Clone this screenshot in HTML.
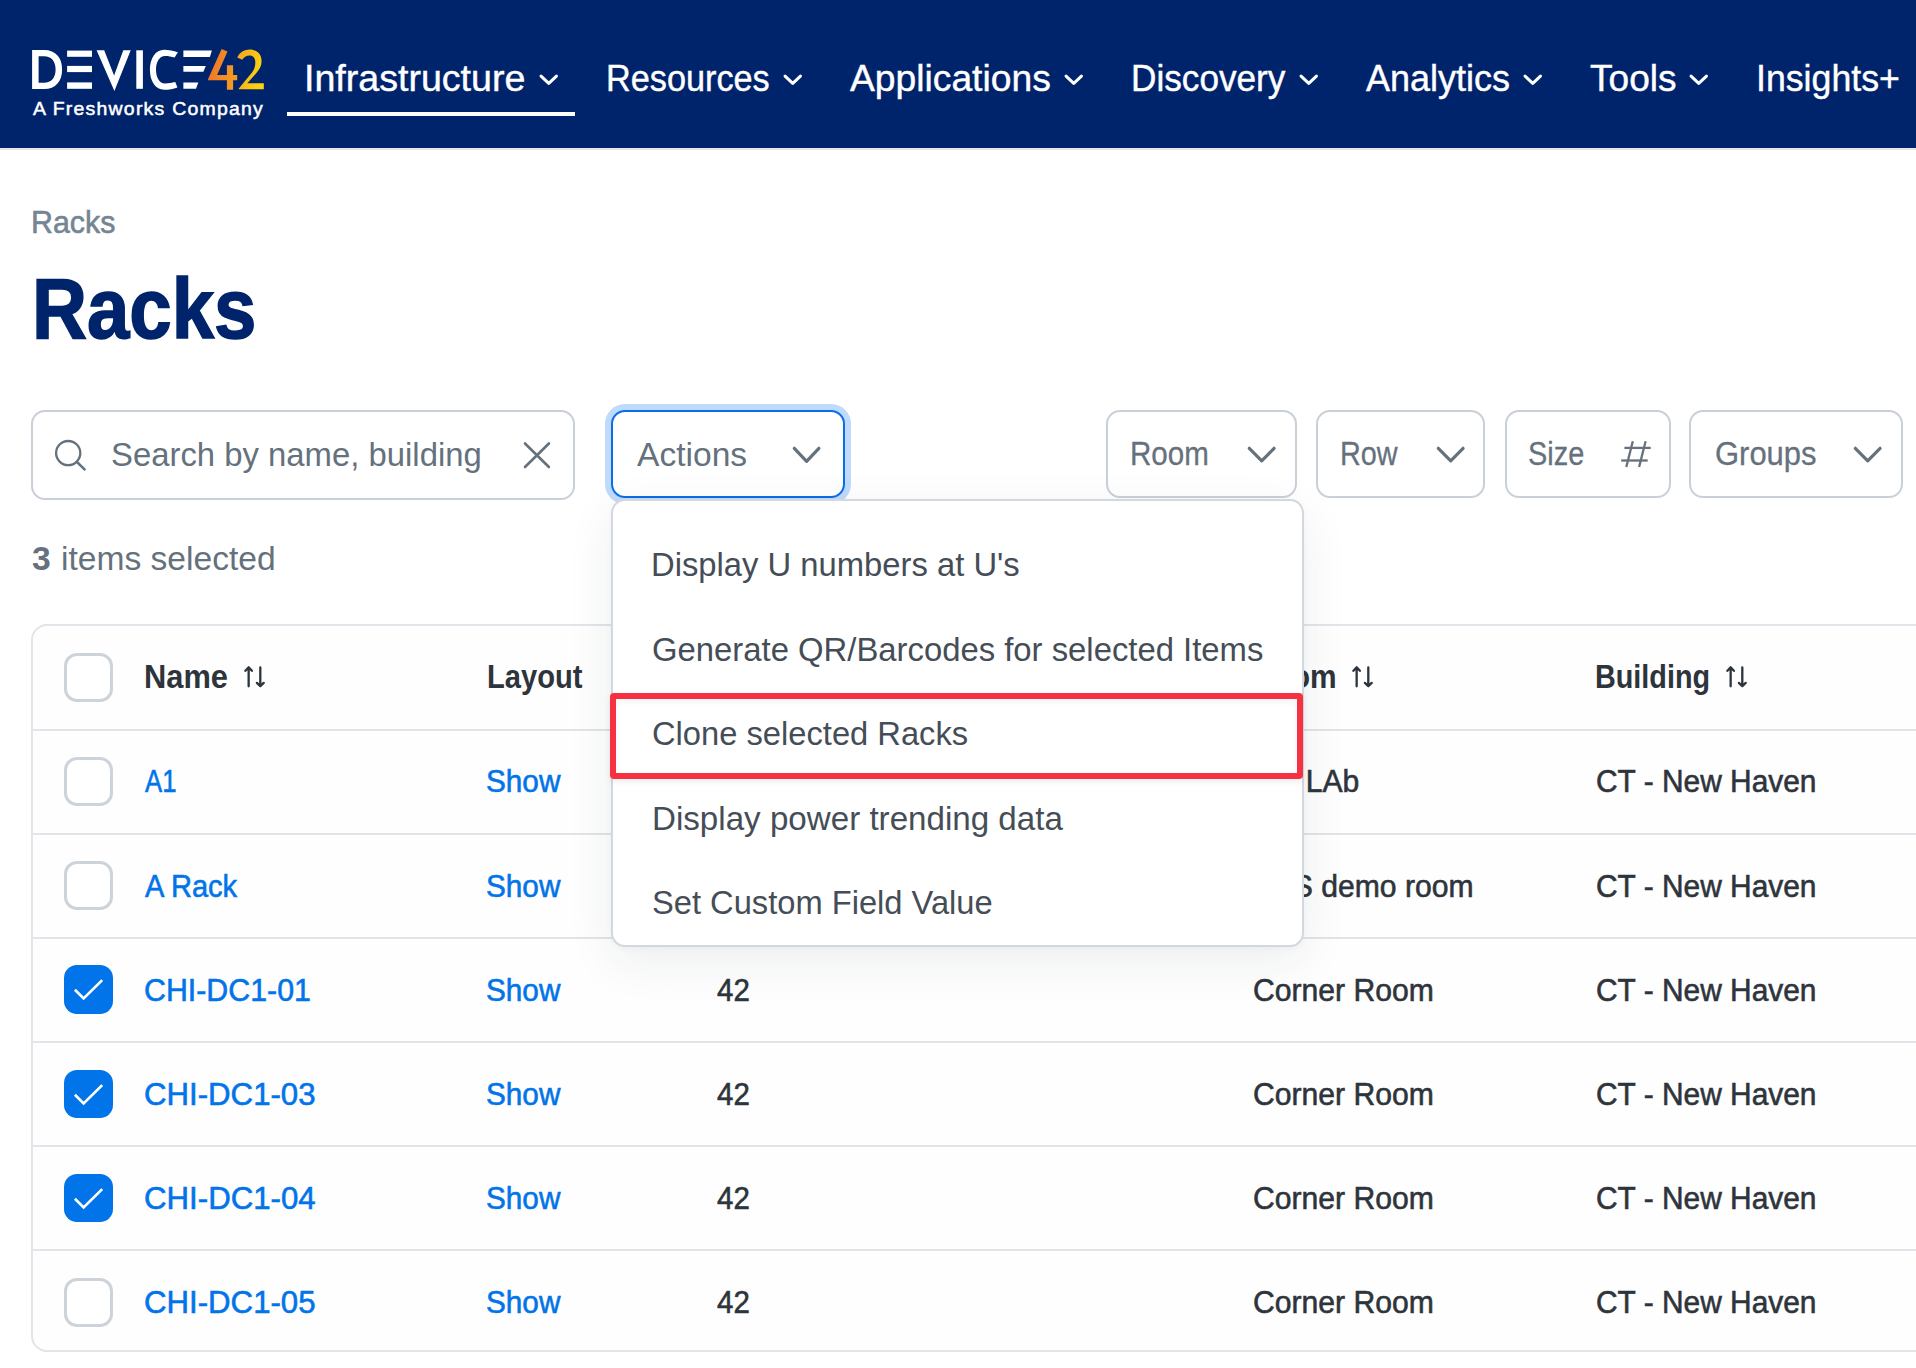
<!DOCTYPE html>
<html><head><meta charset="utf-8"><style>
html,body{margin:0;padding:0;}
body{width:1916px;height:1368px;overflow:hidden;position:relative;background:#fff;font-family:"Liberation Sans", sans-serif;}
.t{position:absolute;white-space:nowrap;line-height:40px;transform-origin:0 0;}
.t .bl{display:inline-block;width:0;height:0;vertical-align:baseline;}
.ic{position:absolute;overflow:visible;}
.box{position:absolute;border:2px solid #c9d0d8;border-radius:14px;box-sizing:border-box;background:#fff;}

</style></head><body>
<div style="position:absolute;left:0;top:0;width:1916px;height:148px;background:#00246b"></div>
<div style="position:absolute;left:0;top:148px;width:1916px;height:2px;background:#e4e7eb"></div>
<svg class="ic" style="left:0;top:0" width="280" height="130" viewBox="0 0 280 130">
<defs>
<linearGradient id="g4" x1="0" y1="0" x2="1" y2="0.3"><stop offset="0" stop-color="#ee6f2d"/><stop offset="1" stop-color="#f59a21"/></linearGradient>
<linearGradient id="g2" x1="0" y1="0" x2="1" y2="0.4"><stop offset="0" stop-color="#f5a51f"/><stop offset="1" stop-color="#fdd30f"/></linearGradient>
</defs>
<g fill="#fff">
<path d="M32.1,50 H44 C56,50 62.1,58 62.1,69.5 C62.1,81 56,89.1 44,89.1 H32.1 Z M38.6,56.3 V82.8 H44 C51.5,82.8 55.6,77.5 55.6,69.5 C55.6,61.5 51.5,56.3 44,56.3 Z"/>
<rect x="67.1" y="50.6" width="24.9" height="6.2"/>
<rect x="67.1" y="65.9" width="24.9" height="6.2"/>
<rect x="67.1" y="82.4" width="24.9" height="6.4"/>
<path d="M96.6,50.3 H104.2 L114.1,75.6 L123.3,50.3 H130.7 L114.4,91 Z"/>
<rect x="136.3" y="50.3" width="6.6" height="38.5"/>
<path d="M177.9,52.3 C173.5,50.6 168.8,49.75 164.2,49.75 C155.5,49.75 149.9,58.5 149.9,69.8 C149.9,81.1 155.5,89.8 164.2,89.8 C169,89.8 173.3,89 177.4,87.4 L175.3,82.1 C172,83 168.5,83.4 165,83.4 C159.5,83.4 156,77.5 156,69.7 C156,61.9 159.5,56 165,56 C168.5,56 171.6,56.6 174.6,57.6 Z"/>
<path d="M183.4,50.4 H211.9 L209.9,56.9 H183.4 Z"/>
<path d="M183.4,66 H205.8 L203.4,71.8 H183.4 Z"/>
<path d="M183.4,82.5 H198.3 L196,88.8 H183.4 Z"/>
</g>
<path fill="url(#g4)" d="M221.6,49 L227.5,51.6 L217.1,75 H226.9 V65.3 H233.1 V75 H237.2 V80.3 H233.1 V89.8 H226.9 V80.3 H208.1 V79 Z"/>
<path fill="url(#g2)" d="M237.2,57.4 C239.6,52.2 244.2,49.4 249.8,49.4 C256.6,49.4 261.6,54.2 261.6,61.2 C261.6,65.8 259.6,69.2 256.2,73.2 L247.3,83.2 H263.8 V89.2 H238.8 V88.6 L252.2,72.2 C254.4,69.4 255.3,66.4 255.3,62.2 C255.3,58 253,55.4 249.6,55.4 C246.2,55.4 243.8,57.2 242.3,59.8 Z"/>
</svg>
<div id="logo_sub" class="t" style="left:33.00px;top:88.80px;font-size:19px;color:#fff;font-weight:400;transform:scaleX(1.0234);-webkit-text-stroke-width:0.5px;letter-spacing:1.2px;">A Freshworks Company<i class="bl"></i></div>
<div id="nav1" class="t" style="left:304.20px;top:59.00px;font-size:36px;color:#fff;font-weight:400;transform:scaleX(1.0435);-webkit-text-stroke-width:0.4px;">Infrastructure<i class="bl"></i></div>
<svg class="ic" style="left:536.7px;top:71.7px" width="23.5" height="15.5"><polyline points="4.05,4.05 11.75,11.45 19.45,4.05" fill="none" stroke="#fff" stroke-width="3" stroke-linecap="round" stroke-linejoin="round"/></svg>
<div id="nav2" class="t" style="left:606.40px;top:59.00px;font-size:36px;color:#fff;font-weight:400;transform:scaleX(0.9513);-webkit-text-stroke-width:0.4px;">Resources<i class="bl"></i></div>
<svg class="ic" style="left:780.7px;top:71.7px" width="23.5" height="15.5"><polyline points="4.05,4.05 11.75,11.45 19.45,4.05" fill="none" stroke="#fff" stroke-width="3" stroke-linecap="round" stroke-linejoin="round"/></svg>
<div id="nav3" class="t" style="left:850.00px;top:59.00px;font-size:36px;color:#fff;font-weight:400;transform:scaleX(1.0343);-webkit-text-stroke-width:0.4px;">Applications<i class="bl"></i></div>
<svg class="ic" style="left:1061.6px;top:71.7px" width="23.5" height="15.5"><polyline points="4.05,4.05 11.75,11.45 19.45,4.05" fill="none" stroke="#fff" stroke-width="3" stroke-linecap="round" stroke-linejoin="round"/></svg>
<div id="nav4" class="t" style="left:1130.80px;top:59.00px;font-size:36px;color:#fff;font-weight:400;transform:scaleX(0.9769);-webkit-text-stroke-width:0.4px;">Discovery<i class="bl"></i></div>
<svg class="ic" style="left:1296.5px;top:71.7px" width="23.5" height="15.5"><polyline points="4.05,4.05 11.75,11.45 19.45,4.05" fill="none" stroke="#fff" stroke-width="3" stroke-linecap="round" stroke-linejoin="round"/></svg>
<div id="nav5" class="t" style="left:1366.10px;top:59.00px;font-size:36px;color:#fff;font-weight:400;transform:scaleX(1.0001);-webkit-text-stroke-width:0.4px;">Analytics<i class="bl"></i></div>
<svg class="ic" style="left:1521.3px;top:71.7px" width="23.5" height="15.5"><polyline points="4.05,4.05 11.75,11.45 19.45,4.05" fill="none" stroke="#fff" stroke-width="3" stroke-linecap="round" stroke-linejoin="round"/></svg>
<div id="nav6" class="t" style="left:1589.70px;top:59.00px;font-size:36px;color:#fff;font-weight:400;transform:scaleX(1.0297);-webkit-text-stroke-width:0.4px;">Tools<i class="bl"></i></div>
<svg class="ic" style="left:1686.7px;top:71.7px" width="23.5" height="15.5"><polyline points="4.05,4.05 11.75,11.45 19.45,4.05" fill="none" stroke="#fff" stroke-width="3" stroke-linecap="round" stroke-linejoin="round"/></svg>
<div id="nav7" class="t" style="left:1755.60px;top:59.00px;font-size:36px;color:#fff;font-weight:400;transform:scaleX(0.9915);-webkit-text-stroke-width:0.4px;">Insights+<i class="bl"></i></div>
<div style="position:absolute;left:287px;top:112px;width:288px;height:4px;background:#fff"></div>
<div id="bc" class="t" style="left:30.60px;top:201.91px;font-size:32px;color:#748593;font-weight:400;transform:scaleX(0.9490);-webkit-text-stroke-width:0.6px;">Racks<i class="bl"></i></div>
<div id="title" class="t" style="left:32.10px;top:288.00px;font-size:86px;color:#00246b;font-weight:700;transform:scaleX(0.8854);-webkit-text-stroke-width:1.6px;">Racks<i class="bl"></i></div>
<div class="box" style="left:31px;top:410px;width:544px;height:90px;border-color:#c9d0d8"></div>
<svg class="ic" style="left:50px;top:436px" width="40" height="40"><circle cx="18.2" cy="17.1" r="12.1" fill="none" stroke="#65717c" stroke-width="2.3"/><line x1="27" y1="26" x2="35.3" y2="34.1" stroke="#65717c" stroke-width="2.5" stroke-linecap="butt"/></svg>
<div id="search" class="t" style="left:110.50px;top:434.00px;font-size:34px;color:#65717c;font-weight:400;transform:scaleX(0.9663);">Search by name, building<i class="bl"></i></div>
<svg class="ic" style="left:520px;top:439px" width="34" height="33"><path d="M5,4.5 L28.9,28 M28.9,4.5 L5,28" stroke="#65717c" stroke-width="2.6" stroke-linecap="round"/></svg>
<div style="position:absolute;left:605px;top:404px;width:246px;height:100px;border-radius:20px;background:#bfdafc"></div>
<div class="box" style="left:611px;top:410px;width:234px;height:88px;border-color:#0a6ee8;background:#fff"></div>
<div id="actions" class="t" style="left:637.40px;top:434.20px;font-size:34px;color:#65717c;font-weight:400;transform:scaleX(0.9875);">Actions<i class="bl"></i></div>
<svg class="ic" style="left:789.8px;top:443.7px" width="33.2" height="21.6"><polyline points="4.32,4.32 16.6,17.279999999999998 28.88,4.32" fill="none" stroke="#65717c" stroke-width="3.2" stroke-linecap="round" stroke-linejoin="round"/></svg>
<div class="box" style="left:1106px;top:410px;width:191px;height:88px;border-color:#c9d0d8"></div>
<div id="f_room" class="t" style="left:1130.20px;top:433.91px;font-size:33px;color:#65717c;font-weight:400;transform:scaleX(0.8957);-webkit-text-stroke-width:0.3px;">Room<i class="bl"></i></div>
<svg class="ic" style="left:1245.0px;top:443.8px" width="33.4" height="21.1"><polyline points="4.32,4.32 16.7,16.779999999999998 29.08,4.32" fill="none" stroke="#65717c" stroke-width="3.2" stroke-linecap="round" stroke-linejoin="round"/></svg>
<div class="box" style="left:1315.7px;top:410px;width:169.7px;height:88px;border-color:#c9d0d8"></div>
<div id="f_row" class="t" style="left:1339.60px;top:433.91px;font-size:33px;color:#65717c;font-weight:400;transform:scaleX(0.8727);-webkit-text-stroke-width:0.3px;">Row<i class="bl"></i></div>
<svg class="ic" style="left:1434.2px;top:443.8px" width="33.4" height="21.1"><polyline points="4.32,4.32 16.7,16.779999999999998 29.08,4.32" fill="none" stroke="#65717c" stroke-width="3.2" stroke-linecap="round" stroke-linejoin="round"/></svg>
<div class="box" style="left:1504.6px;top:410px;width:166px;height:88px;border-color:#c9d0d8"></div>
<div id="f_size" class="t" style="left:1528.20px;top:433.91px;font-size:33px;color:#65717c;font-weight:400;transform:scaleX(0.8760);-webkit-text-stroke-width:0.3px;">Size<i class="bl"></i></div>
<div class="box" style="left:1689.2px;top:410px;width:213.5px;height:88px;border-color:#c9d0d8"></div>
<div id="f_groups" class="t" style="left:1714.50px;top:434.00px;font-size:33px;color:#65717c;font-weight:400;transform:scaleX(0.9381);-webkit-text-stroke-width:0.3px;">Groups<i class="bl"></i></div>
<svg class="ic" style="left:1850.8px;top:443.8px" width="33.4" height="21.1"><polyline points="4.32,4.32 16.7,16.779999999999998 29.08,4.32" fill="none" stroke="#65717c" stroke-width="3.2" stroke-linecap="round" stroke-linejoin="round"/></svg>
<svg class="ic" style="left:1615px;top:436px" width="42" height="36"><g stroke="#65717c" stroke-width="2.3" stroke-linecap="butt"><line x1="17.8" y1="5.2" x2="11.3" y2="31"/><line x1="30.6" y1="5.2" x2="24.1" y2="31"/><line x1="9.4" y1="11.9" x2="35.7" y2="11.9"/><line x1="6.2" y1="24.5" x2="32.7" y2="24.5"/></g></svg>
<div id="sel3" class="t" style="left:31.80px;top:537.70px;font-size:34px;color:#65717c;font-weight:700;transform:scaleX(0.9879);">3<i class="bl"></i></div>
<div id="sel" class="t" style="left:60.80px;top:537.70px;font-size:34px;color:#65717c;font-weight:400;transform:scaleX(0.9879);">items selected<i class="bl"></i></div>
<div style="position:absolute;left:31px;top:624px;width:1950px;height:728px;border:2px solid #e1e4e8;border-radius:16px;box-sizing:border-box;background:#fefefe"></div>
<div style="position:absolute;left:33px;top:729px;width:1900px;height:2px;background:#e1e4e8"></div>
<div style="position:absolute;left:33px;top:832.5px;width:1900px;height:2px;background:#e1e4e8"></div>
<div style="position:absolute;left:33px;top:936.5px;width:1900px;height:2px;background:#e1e4e8"></div>
<div style="position:absolute;left:33px;top:1041px;width:1900px;height:2px;background:#e1e4e8"></div>
<div style="position:absolute;left:33px;top:1144.5px;width:1900px;height:2px;background:#e1e4e8"></div>
<div style="position:absolute;left:33px;top:1248.7px;width:1900px;height:2px;background:#e1e4e8"></div>
<div style="position:absolute;left:64.3px;top:653.1px;width:48.5px;height:48.5px;border-radius:13px;border:3.6px solid #cdd3da;box-sizing:border-box;background:#fff"></div>
<div id="h_name" class="t" style="left:144.00px;top:657.20px;font-size:33px;color:#2e343b;font-weight:700;transform:scaleX(0.9336);">Name<i class="bl"></i></div>
<div id="h_layout" class="t" style="left:486.60px;top:657.00px;font-size:33px;color:#2e343b;font-weight:700;transform:scaleX(0.8833);">Layout<i class="bl"></i></div>
<div id="h_size" class="t" style="left:715.60px;top:657.00px;font-size:33px;color:#2e343b;font-weight:700;transform:scaleX(0.8833);">Size<i class="bl"></i></div>
<div id="h_room" class="t" style="left:1251.50px;top:657.00px;font-size:33px;color:#2e343b;font-weight:700;transform:scaleX(0.9060);">Room<i class="bl"></i></div>
<div id="h_building" class="t" style="left:1594.70px;top:657.00px;font-size:33px;color:#2e343b;font-weight:700;transform:scaleX(0.8720);">Building<i class="bl"></i></div>
<svg class="ic" style="left:243.6px;top:666px" width="22" height="23"><g fill="none" stroke="#2e343b" stroke-width="2.3" stroke-linecap="round" stroke-linejoin="round"><path d="M4.65,20.3 V1.4 M1.4,4.8 L4.65,1.4 L7.9,4.8"/><path d="M16.3,1.4 V20.2 M12.9,16.9 L16.3,20.2 L19.7,16.9"/></g></svg>
<svg class="ic" style="left:1352px;top:666px" width="22" height="23"><g fill="none" stroke="#2e343b" stroke-width="2.3" stroke-linecap="round" stroke-linejoin="round"><path d="M4.65,20.3 V1.4 M1.4,4.8 L4.65,1.4 L7.9,4.8"/><path d="M16.3,1.4 V20.2 M12.9,16.9 L16.3,20.2 L19.7,16.9"/></g></svg>
<svg class="ic" style="left:1726.1px;top:666px" width="22" height="23"><g fill="none" stroke="#2e343b" stroke-width="2.3" stroke-linecap="round" stroke-linejoin="round"><path d="M4.65,20.3 V1.4 M1.4,4.8 L4.65,1.4 L7.9,4.8"/><path d="M16.3,1.4 V20.2 M12.9,16.9 L16.3,20.2 L19.7,16.9"/></g></svg>
<div style="position:absolute;left:64.3px;top:757.2px;width:48.5px;height:48.5px;border-radius:13px;border:3.6px solid #cdd3da;box-sizing:border-box;background:#fff"></div>
<div id="r0_name" class="t" style="left:145.30px;top:760.91px;font-size:32px;color:#0274e9;font-weight:400;transform:scaleX(0.8026);-webkit-text-stroke-width:0.6px;">A1<i class="bl"></i></div>
<div id="r0_show" class="t" style="left:486.30px;top:760.91px;font-size:32px;color:#0274e9;font-weight:400;transform:scaleX(0.9287);-webkit-text-stroke-width:0.6px;">Show<i class="bl"></i></div>
<div id="r0_size" class="t" style="left:716.60px;top:760.91px;font-size:32px;color:#2e343b;font-weight:400;transform:scaleX(0.9210);-webkit-text-stroke-width:0.6px;">42<i class="bl"></i></div>
<div id="r0_room" class="t" style="left:1242.00px;top:761.30px;font-size:32px;color:#2e343b;font-weight:400;transform:scaleX(0.9416);-webkit-text-stroke-width:0.6px;">D42 LAb<i class="bl"></i></div>
<div id="r0_bld" class="t" style="left:1595.80px;top:760.91px;font-size:32px;color:#2e343b;font-weight:400;transform:scaleX(0.9346);-webkit-text-stroke-width:0.6px;">CT - New Haven<i class="bl"></i></div>
<div style="position:absolute;left:64.3px;top:861.2px;width:48.5px;height:48.5px;border-radius:13px;border:3.6px solid #cdd3da;box-sizing:border-box;background:#fff"></div>
<div id="r1_name" class="t" style="left:145.30px;top:866.00px;font-size:32px;color:#0274e9;font-weight:400;transform:scaleX(0.9092);-webkit-text-stroke-width:0.6px;">A Rack<i class="bl"></i></div>
<div id="r1_show" class="t" style="left:486.30px;top:866.01px;font-size:32px;color:#0274e9;font-weight:400;transform:scaleX(0.9287);-webkit-text-stroke-width:0.6px;">Show<i class="bl"></i></div>
<div id="r1_size" class="t" style="left:716.60px;top:866.01px;font-size:32px;color:#2e343b;font-weight:400;transform:scaleX(0.9210);-webkit-text-stroke-width:0.6px;">42<i class="bl"></i></div>
<div id="r1_room" class="t" style="left:1270.80px;top:865.70px;font-size:32px;color:#2e343b;font-weight:400;transform:scaleX(0.9416);-webkit-text-stroke-width:0.6px;">NS demo room<i class="bl"></i></div>
<div id="r1_bld" class="t" style="left:1595.80px;top:866.01px;font-size:32px;color:#2e343b;font-weight:400;transform:scaleX(0.9346);-webkit-text-stroke-width:0.6px;">CT - New Haven<i class="bl"></i></div>
<div style="position:absolute;left:64.3px;top:965.2px;width:48.5px;height:48.5px;border-radius:13px;background:#0274e9"></div><svg class="ic" style="left:64.3px;top:965.2px" width="49" height="49"><polyline points="10.9,24.8 19.6,33.4 38.2,15.1" fill="none" stroke="#fff" stroke-width="2.7" stroke-linecap="butt" stroke-linejoin="miter"/></svg>
<div id="r2_name" class="t" style="left:144.10px;top:970.01px;font-size:32px;color:#0274e9;font-weight:400;transform:scaleX(0.9481);-webkit-text-stroke-width:0.6px;">CHI-DC1-01<i class="bl"></i></div>
<div id="r2_show" class="t" style="left:486.30px;top:970.00px;font-size:32px;color:#0274e9;font-weight:400;transform:scaleX(0.9287);-webkit-text-stroke-width:0.6px;">Show<i class="bl"></i></div>
<div id="r2_size" class="t" style="left:716.60px;top:970.00px;font-size:32px;color:#2e343b;font-weight:400;transform:scaleX(0.9210);-webkit-text-stroke-width:0.6px;">42<i class="bl"></i></div>
<div id="r2_room" class="t" style="left:1252.70px;top:970.00px;font-size:32px;color:#2e343b;font-weight:400;transform:scaleX(0.9416);-webkit-text-stroke-width:0.6px;">Corner Room<i class="bl"></i></div>
<div id="r2_bld" class="t" style="left:1595.80px;top:970.00px;font-size:32px;color:#2e343b;font-weight:400;transform:scaleX(0.9346);-webkit-text-stroke-width:0.6px;">CT - New Haven<i class="bl"></i></div>
<div style="position:absolute;left:64.3px;top:1069.6px;width:48.5px;height:48.5px;border-radius:13px;background:#0274e9"></div><svg class="ic" style="left:64.3px;top:1069.6px" width="49" height="49"><polyline points="10.9,24.8 19.6,33.4 38.2,15.1" fill="none" stroke="#fff" stroke-width="2.7" stroke-linecap="butt" stroke-linejoin="miter"/></svg>
<div id="r3_name" class="t" style="left:144.30px;top:1073.90px;font-size:32px;color:#0274e9;font-weight:400;transform:scaleX(0.9746);-webkit-text-stroke-width:0.6px;">CHI-DC1-03<i class="bl"></i></div>
<div id="r3_show" class="t" style="left:486.30px;top:1073.90px;font-size:32px;color:#0274e9;font-weight:400;transform:scaleX(0.9287);-webkit-text-stroke-width:0.6px;">Show<i class="bl"></i></div>
<div id="r3_size" class="t" style="left:716.60px;top:1073.90px;font-size:32px;color:#2e343b;font-weight:400;transform:scaleX(0.9210);-webkit-text-stroke-width:0.6px;">42<i class="bl"></i></div>
<div id="r3_room" class="t" style="left:1252.70px;top:1073.90px;font-size:32px;color:#2e343b;font-weight:400;transform:scaleX(0.9416);-webkit-text-stroke-width:0.6px;">Corner Room<i class="bl"></i></div>
<div id="r3_bld" class="t" style="left:1595.80px;top:1073.90px;font-size:32px;color:#2e343b;font-weight:400;transform:scaleX(0.9346);-webkit-text-stroke-width:0.6px;">CT - New Haven<i class="bl"></i></div>
<div style="position:absolute;left:64.3px;top:1173.9px;width:48.5px;height:48.5px;border-radius:13px;background:#0274e9"></div><svg class="ic" style="left:64.3px;top:1173.9px" width="49" height="49"><polyline points="10.9,24.8 19.6,33.4 38.2,15.1" fill="none" stroke="#fff" stroke-width="2.7" stroke-linecap="butt" stroke-linejoin="miter"/></svg>
<div id="r4_name" class="t" style="left:144.30px;top:1177.91px;font-size:32px;color:#0274e9;font-weight:400;transform:scaleX(0.9756);-webkit-text-stroke-width:0.6px;">CHI-DC1-04<i class="bl"></i></div>
<div id="r4_show" class="t" style="left:486.30px;top:1177.91px;font-size:32px;color:#0274e9;font-weight:400;transform:scaleX(0.9287);-webkit-text-stroke-width:0.6px;">Show<i class="bl"></i></div>
<div id="r4_size" class="t" style="left:716.60px;top:1177.91px;font-size:32px;color:#2e343b;font-weight:400;transform:scaleX(0.9210);-webkit-text-stroke-width:0.6px;">42<i class="bl"></i></div>
<div id="r4_room" class="t" style="left:1252.70px;top:1177.91px;font-size:32px;color:#2e343b;font-weight:400;transform:scaleX(0.9416);-webkit-text-stroke-width:0.6px;">Corner Room<i class="bl"></i></div>
<div id="r4_bld" class="t" style="left:1595.80px;top:1177.91px;font-size:32px;color:#2e343b;font-weight:400;transform:scaleX(0.9346);-webkit-text-stroke-width:0.6px;">CT - New Haven<i class="bl"></i></div>
<div style="position:absolute;left:64.3px;top:1278.2px;width:48.5px;height:48.5px;border-radius:13px;border:3.6px solid #cdd3da;box-sizing:border-box;background:#fff"></div>
<div id="r5_name" class="t" style="left:144.30px;top:1281.91px;font-size:32px;color:#0274e9;font-weight:400;transform:scaleX(0.9746);-webkit-text-stroke-width:0.6px;">CHI-DC1-05<i class="bl"></i></div>
<div id="r5_show" class="t" style="left:486.30px;top:1281.91px;font-size:32px;color:#0274e9;font-weight:400;transform:scaleX(0.9287);-webkit-text-stroke-width:0.6px;">Show<i class="bl"></i></div>
<div id="r5_size" class="t" style="left:716.60px;top:1281.91px;font-size:32px;color:#2e343b;font-weight:400;transform:scaleX(0.9210);-webkit-text-stroke-width:0.6px;">42<i class="bl"></i></div>
<div id="r5_room" class="t" style="left:1252.70px;top:1281.91px;font-size:32px;color:#2e343b;font-weight:400;transform:scaleX(0.9416);-webkit-text-stroke-width:0.6px;">Corner Room<i class="bl"></i></div>
<div id="r5_bld" class="t" style="left:1595.80px;top:1281.91px;font-size:32px;color:#2e343b;font-weight:400;transform:scaleX(0.9346);-webkit-text-stroke-width:0.6px;">CT - New Haven<i class="bl"></i></div>
<div style="position:absolute;left:611px;top:499px;width:693px;height:448px;border:2px solid #d3d8de;border-radius:14px;box-sizing:border-box;background:#fff;box-shadow:0 14px 48px rgba(30,40,60,0.075), 0 2px 6px rgba(30,40,60,0.03)"></div>
<div id="dd0" class="t" style="left:651.10px;top:544.20px;font-size:34px;color:#454d57;font-weight:400;transform:scaleX(0.9639);">Display U numbers at U's<i class="bl"></i></div>
<div id="dd1" class="t" style="left:652.00px;top:628.81px;font-size:34px;color:#454d57;font-weight:400;transform:scaleX(0.9657);">Generate QR/Barcodes for selected Items<i class="bl"></i></div>
<div id="dd2" class="t" style="left:651.60px;top:712.81px;font-size:34px;color:#454d57;font-weight:400;transform:scaleX(0.9614);">Clone selected Racks<i class="bl"></i></div>
<div id="dd3" class="t" style="left:652.30px;top:797.90px;font-size:34px;color:#454d57;font-weight:400;transform:scaleX(0.9749);">Display power trending data<i class="bl"></i></div>
<div id="dd4" class="t" style="left:651.90px;top:881.61px;font-size:34px;color:#454d57;font-weight:400;transform:scaleX(0.9605);">Set Custom Field Value<i class="bl"></i></div>
<div style="position:absolute;left:610px;top:693px;width:693px;height:85.5px;border:6px solid #f63242;border-radius:4px;box-sizing:border-box;box-shadow:0 3px 6px rgba(0,0,0,0.07), inset 0 3px 6px rgba(0,0,0,0.05)"></div>
</body></html>
